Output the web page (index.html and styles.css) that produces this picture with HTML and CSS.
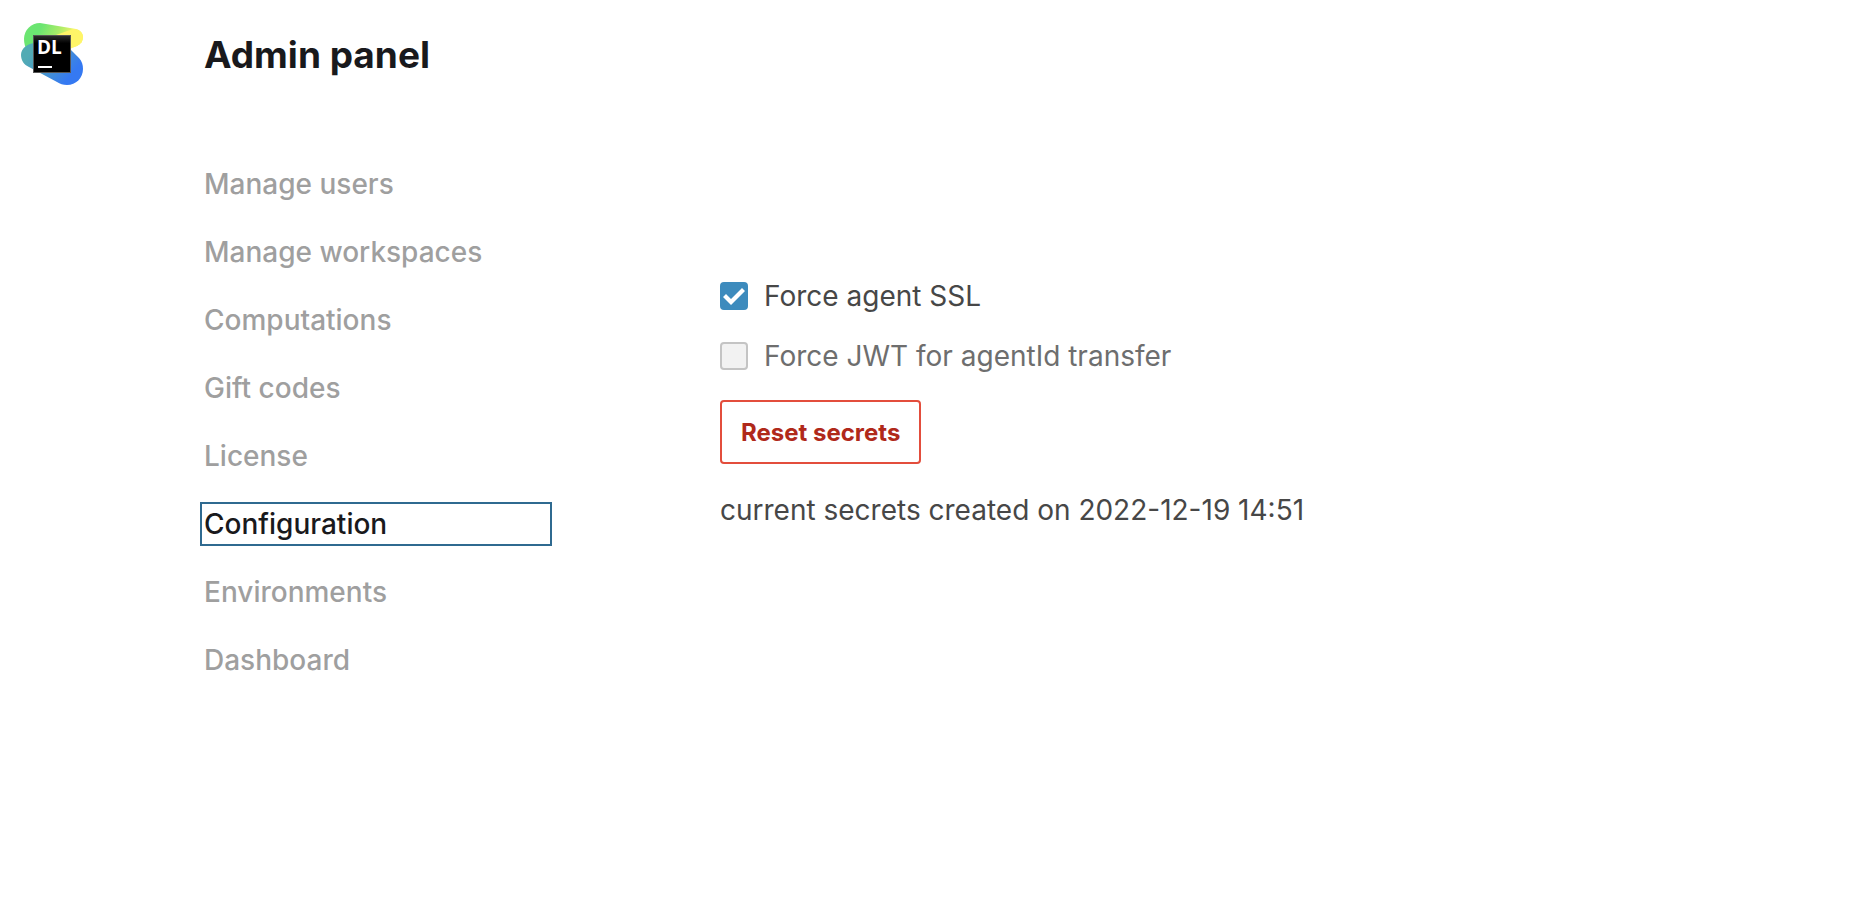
FILE: index.html
```html
<!DOCTYPE html>
<html lang="en">
<head>
<meta charset="UTF-8">
<meta name="viewport" content="width=device-width, initial-scale=1.0">
<title>Admin panel</title>
<link rel="stylesheet" href="styles.css">
</head>
<body>
<div class="page">
<a class="logo" href="#" aria-label="Home">
<svg viewBox="0 0 64 64" width="64" height="64">
<defs>
<linearGradient id="green" x1="0" y1="0" x2="1" y2="0.3">
<stop offset="0.3" stop-color="#6be571"/>
<stop offset="0.6" stop-color="#a9ec68"/>
<stop offset="0.85" stop-color="#f5f568"/>
</linearGradient>
<linearGradient id="blue" x1="0" y1="0.2" x2="1" y2="0.8">
<stop offset="0.15" stop-color="#52abb4"/>
<stop offset="0.5" stop-color="#4796cc"/>
<stop offset="0.85" stop-color="#3579f2"/>
</linearGradient>
<linearGradient id="shine" x1="0" y1="0" x2="0" y2="1">
<stop offset="0" stop-color="#2b2b2b"/>
<stop offset="0.2" stop-color="#000"/>
</linearGradient>
</defs>
<path d="M20 1 L56 7 C61 8 63 12 63 15 C63 19 61 22 57 24 L17 36 C8 34 4 25 4 17 C4 8 11 1 20 1Z" fill="url(#green)"/>
<path d="M36 13 L53 7 C59 7 63 11 63 15 C63 19 61 22 57 24 L42 30Z" fill="#fff568"/>
<path d="M16 21 C26 17 38 16 46 23 L59 36 C62 39 63 43 63 47 C63 56 56 63 47 63 C43 63 40 62 37 60 L9 45 C4 43 1 38 1 33 C1 27 7 21 16 21Z" fill="url(#blue)"/>
<rect x="13" y="13" width="38" height="38" fill="#555"/>
<rect x="14" y="14" width="36" height="36" fill="url(#shine)"/>
<text class="logo-text" x="17" y="32">DL</text>
<rect x="18" y="44" width="14" height="2" fill="#fff"/>
</svg>
</a>
<main class="main">
<h1>Admin panel</h1>
<div class="columns">
<nav class="menu">
<a href="#">Manage users</a>
<a href="#">Manage workspaces</a>
<a href="#">Computations</a>
<a href="#">Gift codes</a>
<a href="#">License</a>
<a href="#" class="active" aria-current="page">Configuration</a>
<a href="#">Environments</a>
<a href="#">Dashboard</a>
</nav>
<section class="config">
<div class="options">
<label class="option">
<input type="checkbox" checked>
<span>Force agent SSL</span>
</label>
<label class="option disabled">
<input type="checkbox" disabled>
<span>Force JWT for agentId transfer</span>
</label>
</div>
<button type="button" class="reset">Reset secrets</button>
<p>current secrets created on 2022-12-19 14:51</p>
</section>
</div>
</main>
</div>
</body>
</html>
```
FILE: styles.css
```css
body {
    margin: 0;
    background: #fff;
    font-family: Inter, sans-serif;
    font-size: 28px;
    line-height: 36px;
    color: #474747;
}
.page {
    display: flex;
    padding: 22px 20px;
}
.logo {
    flex: 0 0 184px;
}
.logo svg {
    display: block;
}
.logo-text {
    font-family: "Open Sans", sans-serif;
    font-size: 19px;
    font-weight: 700;
    fill: #fff;
}
.main {
    flex: 1;
}
h1 {
    margin: 10px 0 88px;
    font-size: 37px;
    line-height: 46px;
    font-weight: 700;
    color: #19191c;
}
.columns {
    display: flex;
    gap: 172px;
}
/* Left menu */
.menu {
    display: flex;
    flex-direction: column;
    gap: 32px;
    flex: 0 0 344px;
}
.menu a {
    color: #9f9f9f;
    font-weight: 500;
    text-decoration: none;
}
.menu .active {
    color: #19191c;
    outline: 2px solid #2f6a90;
    outline-offset: 2px;
}
/* Configuration form */
.config {
    display: flex;
    flex-direction: column;
    align-items: flex-start;
    padding-top: 112px;
}
.options {
    display: flex;
    flex-direction: column;
    gap: 24px;
}
.option {
    display: flex;
    align-items: center;
    gap: 16px;
}
.option input {
    appearance: none;
    width: 28px;
    height: 28px;
    margin: 0;
    border: 2px solid #c4c4c4;
    border-radius: 4px;
    background: #f2f2f2;
}
.option input:checked {
    display: grid;
    place-items: center;
    border-color: #3d8bbd;
    background: #3d8bbd;
}
.option input:checked::before {
    content: "";
    width: 24px;
    height: 24px;
    background: #fff;
    clip-path: polygon(1px 13px, 4px 10px, 9px 15px, 20px 4px, 23px 7px, 9px 21px);
}
.disabled {
    color: #6e6e6e;
}
.reset {
    height: 64px;
    margin: 26px 0 28px;
    padding: 0 19px;
    border: 2px solid #e34d3c;
    border-radius: 4px;
    background: #fff;
    font-family: inherit;
    font-size: 24px;
    font-weight: 700;
    color: #b0291a;
}
.config p {
    margin: 0;
}
```
